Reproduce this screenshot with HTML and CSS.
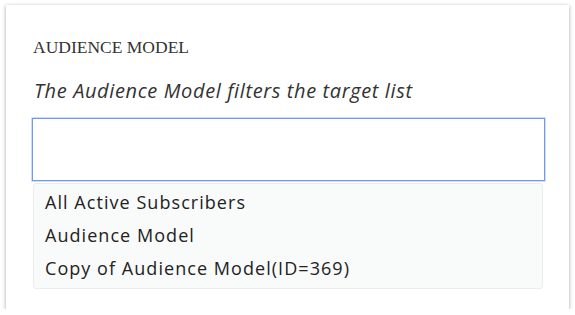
FILE: index.html
```html
<!DOCTYPE html>
<html lang="en">
  <head>
    <meta charset="UTF-8" />
    <meta name="viewport" content="width=device-width, initial-scale=1.0" />
    <title>Audience Model</title>
    <link rel="stylesheet" href="styles.css">
  </head>
  <body>
    <div class="card">
      <div class="field-label">AUDIENCE MODEL</div>
      <p class="field-help">The Audience Model filters the target list</p>
      <div class="combo">
        <input type="text" class="combo-input" />
        <ul class="combo-menu">
          <li>All Active Subscribers</li>
          <li>Audience Model</li>
          <li>Copy of Audience Model(ID=369)</li>
        </ul>
      </div>
    </div>
  </body>
</html>
```

FILE: styles.css
```css
html,
body {
  margin: 0;
  padding: 0;
  background: #fff;
}
.card {
  box-sizing: border-box;
  width: 563px;
  height: 304px;
  margin: 5px 0 0 6px;
  padding: 32px 24px 0 26px;
  background: #fff;
  box-shadow: 0 1px 4px rgba(0, 0, 0, 0.35);
}
.field-label {
  font-family: "Liberation Serif", serif;
  font-size: 17.5px;
  line-height: 20px;
  color: #333;
  padding-left: 1px;
}
.field-help {
  margin: 22px 0 15px 2px;
  font-family: "Open Sans", sans-serif;
  font-style: italic;
  font-size: 20px;
  letter-spacing: 0.62px;
  line-height: 24px;
  color: #333;
}
.combo {
  position: relative;
}
.combo-input {
  display: block;
  box-sizing: border-box;
  width: 513px;
  height: 63px;
  margin: 0;
  border: 1px solid #6f9be8;
  box-shadow: 0 0 0 0.5px #9bbcf2;
  outline: none;
  background: #fff;
}
.combo-menu {
  position: absolute;
  top: 65px;
  left: 1px;
  width: 510px;
  box-sizing: border-box;
  margin: 0;
  padding: 2px 0 3px;
  list-style: none;
  background: #f9fafa;
  border: 1px solid #ececec;
  border-radius: 3px;
}
.combo-menu li {
  padding: 0 11px;
  font-family: "Open Sans", sans-serif;
  font-size: 18px;
  letter-spacing: 1.05px;
  line-height: 33px;
  color: #222;
}
```
